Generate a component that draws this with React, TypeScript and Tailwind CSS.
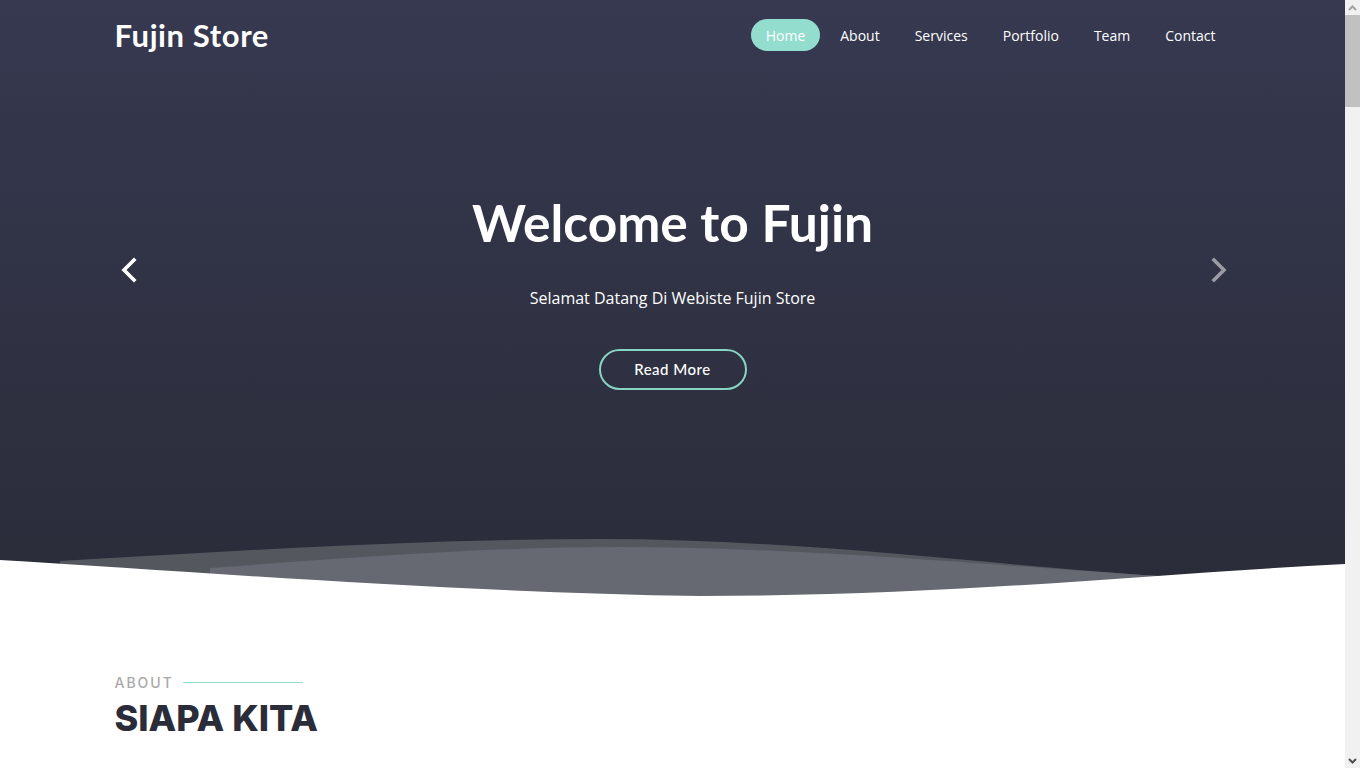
import React from 'react';

const navLinks = ['Home', 'About', 'Services', 'Portfolio', 'Team', 'Contact'];

const Chevron = ({ dir, className }: { dir: 'left' | 'right'; className?: string }) => (
  <svg width="18" height="26" viewBox="0 0 18 26" className={className}>
    <polyline
      points={dir === 'left' ? '14,3 4,13 14,23' : '4,3 14,13 4,23'}
      fill="none"
      stroke="currentColor"
      strokeWidth="3.6"
      strokeLinecap="square"
    />
  </svg>
);

const Wave = () => (
  <svg
    className="absolute bottom-0 left-0 w-full h-[62px] pointer-events-none"
    viewBox="0 538 1345 62"
    preserveAspectRatio="none"
  >
    <path d="M60,563 C250,552 420,541 600,541 C800,541 1000,568 1160,578 L1160,600 L60,600 Z" fill="#55575f" />
    <path d="M210,570 C350,560 480,549 620,549 C800,549 1000,568 1160,578 L1160,600 L210,600 Z" fill="#666872" />
    <path d="M0,562 C200,574 450,594 700,598 C950,598 1150,576 1345,566 L1345,600 L0,600 Z" fill="#ffffff" />
  </svg>
);

// page scrollbar, as the browser draws it
const ScrollBar = () => (
  <div className="w-[15px] h-full bg-[#f1f1f1] flex flex-col shrink-0">
    <div className="h-[15px] flex items-center justify-center">
      <svg width="9" height="6" viewBox="0 0 9 6">
        <polyline points="1,5 4.5,1.5 8,5" fill="none" stroke="#a3a3a3" strokeWidth="2" />
      </svg>
    </div>
    <div className="h-[92px] bg-[#c1c1c1]"></div>
    <div className="flex-1"></div>
    <div className="h-[15px] flex items-center justify-center">
      <svg width="9" height="6" viewBox="0 0 9 6">
        <polyline points="1,1 4.5,4.5 8,1" fill="none" stroke="#505050" strokeWidth="2" />
      </svg>
    </div>
  </div>
);

const App = () => {
  return (
    <div className="h-screen flex bg-white font-['Open_Sans',sans-serif]">
      <main className="flex-1 h-full overflow-hidden">
        {/* hero */}
        <section className="relative h-[598px] bg-gradient-to-b from-[#363950] to-[#2a2c39] overflow-hidden">
          <header className="max-w-[1140px] mx-auto px-3 h-[70px] flex items-center justify-between">
            <h1 className="text-white text-[31px] font-bold font-['Lato',sans-serif] tracking-[0.6px]">Fujin Store</h1>
            <nav className="flex items-center gap-[5px]">
              {navLinks.map((link) => (
                <a
                  key={link}
                  href="#"
                  className={
                    link === 'Home'
                      ? 'px-[15px] h-[32px] flex items-center rounded-full bg-[#92ddcd] text-white text-[14px]'
                      : 'px-[15px] h-[32px] flex items-center rounded-full text-white text-[14px]'
                  }
                >
                  {link}
                </a>
              ))}
            </nav>
          </header>

          <div className="relative max-w-[1140px] mx-auto px-3">
            <button className="absolute left-[17px] top-[187px] text-white">
              <Chevron dir="left" />
            </button>
            <button className="absolute right-[15px] top-[187px] text-[#9a9ba5]">
              <Chevron dir="right" />
            </button>

            <div className="flex flex-col items-center pt-[122px]">
              <h2 className="text-white text-[51.5px] leading-[60px] font-bold font-['Lato',sans-serif]">Welcome to Fujin</h2>
              <p className="mt-[34px] text-white text-[16px] leading-[24px]">Selamat Datang Di Webiste Fujin Store</p>
              <a
                href="#"
                className="mt-[39px] w-[148px] h-[41px] flex items-center justify-center rounded-full border-2 border-[#86d4c4] text-white text-[15px] font-medium tracking-[0.5px] font-['Lato',sans-serif]"
              >
                Read More
              </a>
            </div>
          </div>

          <Wave />
        </section>

        {/* about */}
        <section className="max-w-[1140px] mx-auto px-3 pt-[74px]">
          <div className="flex items-center gap-[9px]">
            <span className="text-[14px] font-medium tracking-[2px] text-[#aaaaaa] font-['Inter',sans-serif]">ABOUT</span>
            <span className="w-[120px] h-px bg-[#94ddd0]"></span>
          </div>
          <h2 className="mt-[3px] text-[36px] leading-[44px] font-extrabold text-[#2a2c39] font-['Inter',sans-serif]">SIAPA KITA</h2>
        </section>
      </main>
      <ScrollBar />
    </div>
  );
};

export default App;
